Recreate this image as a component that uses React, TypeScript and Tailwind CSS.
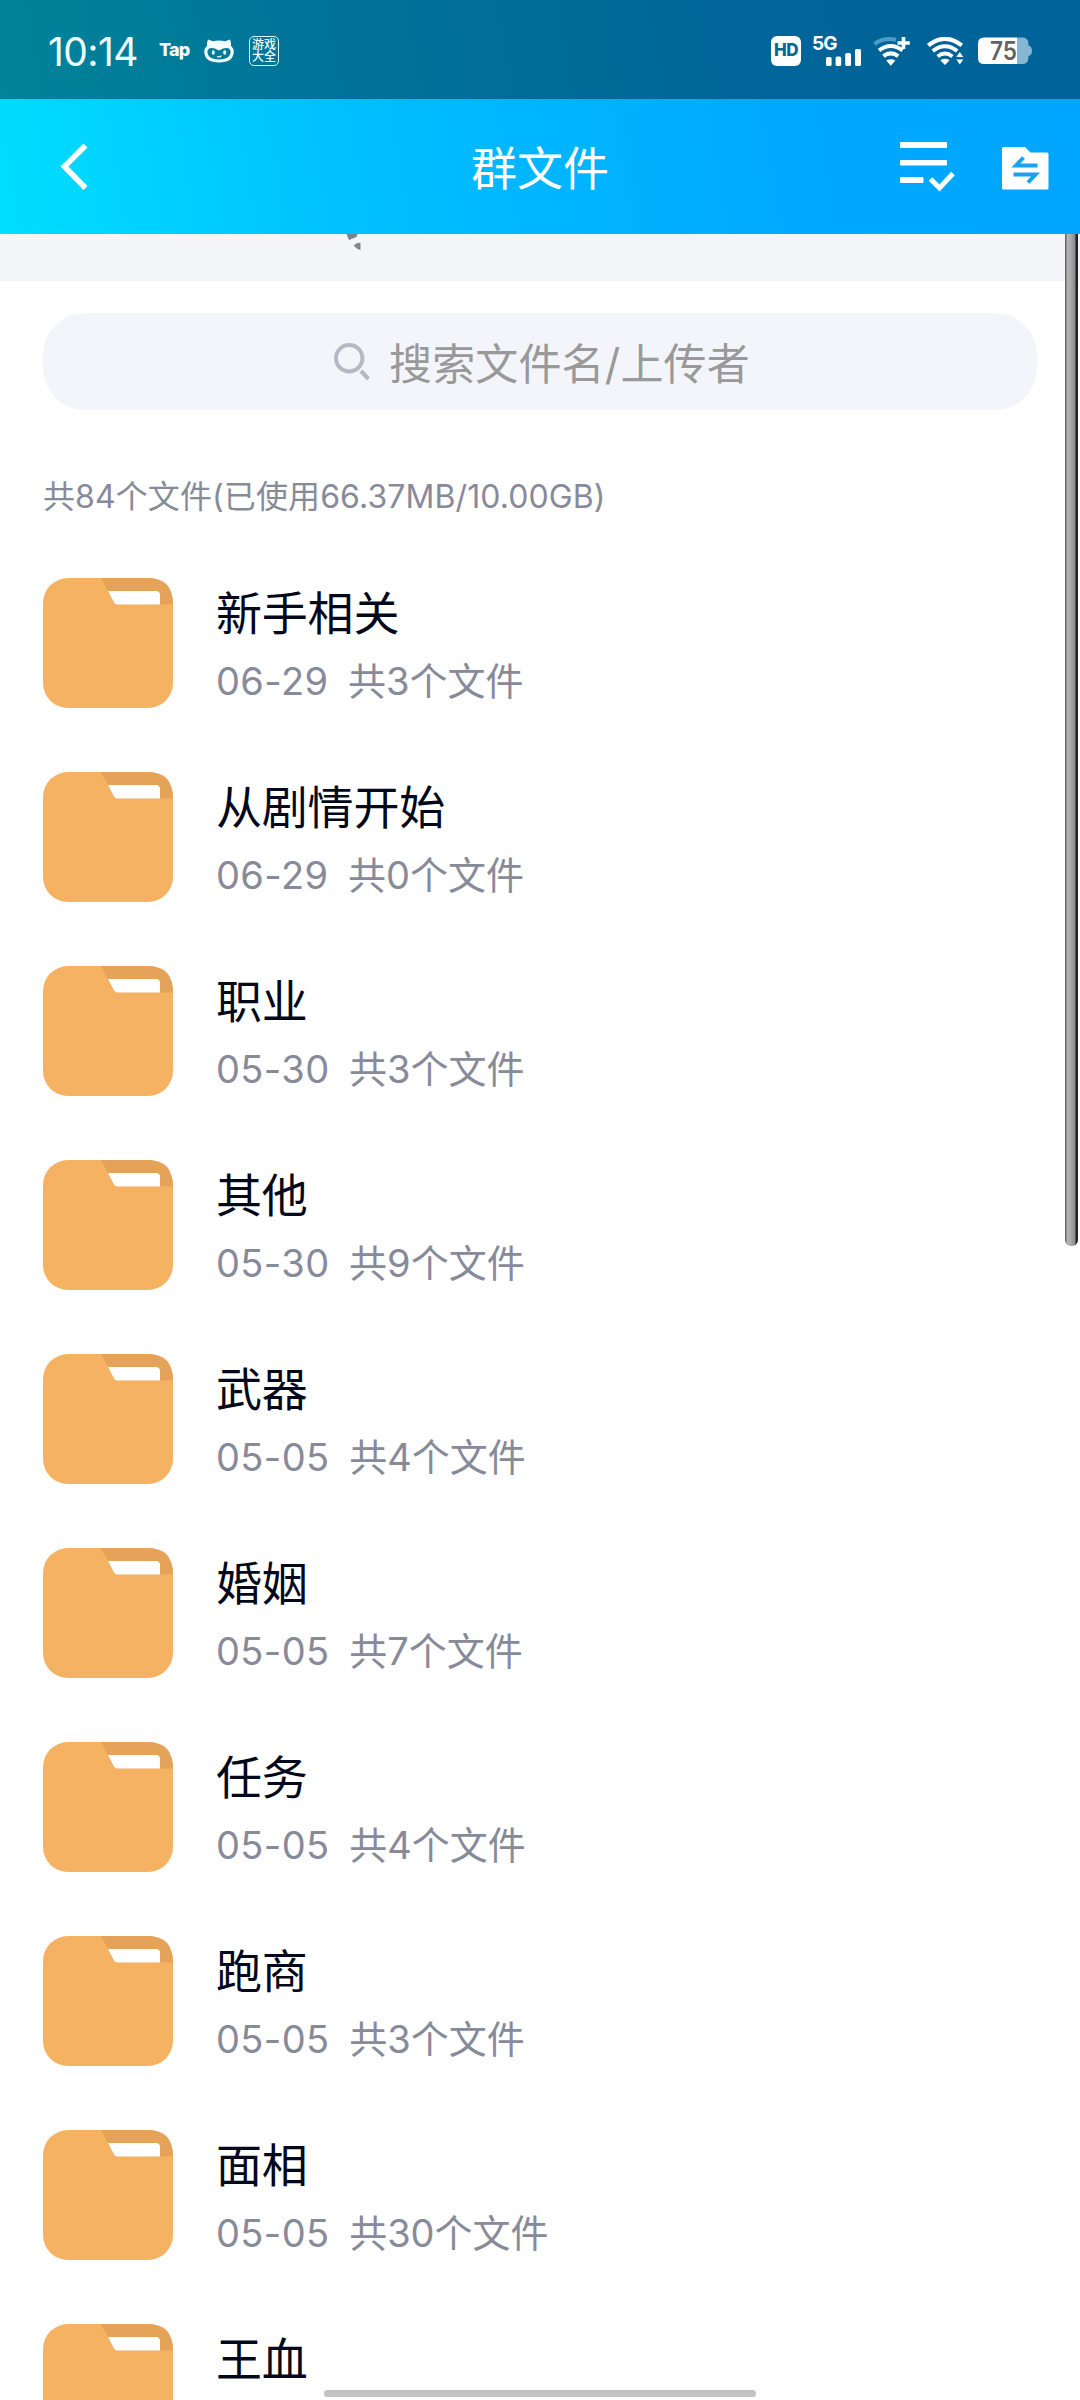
type Folder = {
  name: string;
  date?: string;
  count?: number;
};

const folders: Folder[] = [
  { name: "新手相关", date: "06-29", count: 3 },
  { name: "从剧情开始", date: "06-29", count: 0 },
  { name: "职业", date: "05-30", count: 3 },
  { name: "其他", date: "05-30", count: 9 },
  { name: "武器", date: "05-05", count: 4 },
  { name: "婚姻", date: "05-05", count: 7 },
  { name: "任务", date: "05-05", count: 4 },
  { name: "跑商", date: "05-05", count: 3 },
  { name: "面相", date: "05-05", count: 30 },
  { name: "王血" },
];

const CatIcon = () => (
  <svg width="30" height="24" viewBox="0 0 30 24">
    <path
      d="M4 0.5 L9 2.2 Q15 0.8 21 2.2 L26 0.5 Q27.5 3.5 26.8 6.5 Q30 9.5 29.8 13 Q29 23.5 15 23.5 Q1 23.5 0.2 13 Q0 9.5 3.2 6.5 Q2.5 3.5 4 0.5Z"
      fill="#f2fdff"
    />
    <path
      d="M5 9.5 Q8.5 8 15 11.5 Q21.5 8 25 9.5 Q27 11 26.6 14 Q25 20.5 15 20.5 Q5 20.5 3.4 14 Q3 11 5 9.5Z"
      fill="#007b98"
    />
    <ellipse cx="9.3" cy="13.5" rx="1.5" ry="2.2" fill="#f2fdff" />
    <ellipse cx="20.7" cy="13.5" rx="1.5" ry="2.2" fill="#f2fdff" />
    <path d="M13 17.6 Q15.5 18.6 17.5 16.8" stroke="#f2fdff" strokeWidth="1.3" fill="none" />
  </svg>
);

const SignalIcon = () => (
  <svg width="35" height="17" viewBox="0 0 35 17" fill="#fff">
    <rect x="0" y="8" width="5.6" height="9" rx="1.6" />
    <rect x="9.6" y="7.5" width="5.6" height="9.5" rx="1.6" />
    <rect x="19.2" y="4" width="5.8" height="13" rx="1.6" />
    <rect x="29" y="0" width="6" height="17" rx="1.6" />
  </svg>
);

const WifiPlusIcon = () => (
  <svg width="38" height="30" viewBox="0 0 38 30" fill="none">
    <path d="M1.5 8 Q11 1 23 3.8" stroke="#4d9cc5" strokeWidth="4.2" />
    <path d="M6 14.3 Q17.8 5.8 29.6 14.3" stroke="#fff" strokeWidth="4" />
    <path d="M10.4 20.2 Q17.8 14.6 25.2 20.2" stroke="#fff" strokeWidth="4" />
    <path d="M13.2 24.6 Q17.8 21.8 22.4 24.6 L17.8 29.8Z" fill="#fff" />
    <path d="M30.5 1 V13 M24.5 7 H36.8" stroke="#fff" strokeWidth="3.6" />
  </svg>
);

const WifiIcon = () => (
  <svg width="37" height="28" viewBox="0 0 37 28" fill="none">
    <path d="M1.2 8.4 Q18 -4.6 34.8 8.4" stroke="#fff" strokeWidth="4.2" />
    <path d="M5.8 14 Q18 4.6 30.2 14" stroke="#fff" strokeWidth="4" />
    <path d="M10.6 19.4 Q18 13.6 25.4 19.4" stroke="#fff" strokeWidth="3.8" />
    <path d="M13.4 23.2 Q18 20.4 22.6 23.2 L18 28Z" fill="#fff" />
    <path d="M29.3 20 L32.8 15 L36.3 20Z M29.3 22.4 L32.8 27.4 L36.3 22.4Z" fill="#fff" />
  </svg>
);

const BatteryIcon = () => (
  <svg width="54" height="28" viewBox="0 0 54 28">
    <path d="M39 0.5 H44 Q50 0.5 50.4 6 V8.5 Q54 9 54 14 Q54 18.5 50.4 19 V21.5 Q50 27 44 27 H39Z" fill="#85b6d2" />
    <path d="M6 0.5 H39 V27 H6 Q0 27 0 21 V6.5 Q0 0.5 6 0.5Z" fill="#fff" />
    <text x="12" y="23" fontSize="25" fontWeight="600" fill="#626265" textLength="27" lengthAdjust="spacingAndGlyphs">
      75
    </text>
  </svg>
);

const StatusBar = () => (
  <div className="h-[99px] bg-black/40 flex items-center pl-[48px] pr-[48px] pt-[3px]">
    <div className="w-[90px] text-[39px] leading-none text-[#f0fdff] tracking-[-0.6px]">10:14</div>
    <div className="ml-[21px] w-[31px] text-[18px] leading-none font-extrabold text-[#f2fdff] tracking-[-0.8px] -translate-y-px">
      Tap
    </div>
    <div className="ml-[14px]">
      <CatIcon />
    </div>
    <div className="ml-[15px] size-[30px] rounded-[5px] border border-[#dff6fb] text-[#f2fdff] text-[12px] leading-[12px] font-medium text-center flex flex-col justify-center">
      <span>游戏</span>
      <span>大全</span>
    </div>

    <div className="ml-auto size-[30px] rounded-[6px] bg-white text-[#0a6598] text-[17px] font-extrabold tracking-[-0.5px] flex items-center justify-center">
      HD
    </div>
    <div className="ml-[11px] w-[49px] h-[30px] relative">
      <span className="absolute left-0 -top-[1px] text-[19px] leading-[18px] font-bold text-white tracking-[-1px]">5G</span>
      <div className="absolute right-0 bottom-0">
        <SignalIcon />
      </div>
    </div>
    <div className="ml-[12px]">
      <WifiPlusIcon />
    </div>
    <div className="ml-[16px]">
      <WifiIcon />
    </div>
    <div className="ml-[14px]">
      <BatteryIcon />
    </div>
  </div>
);

const Header = () => (
  <div className="h-[135px] grid grid-cols-3 items-center">
    <svg className="ml-[60px]" width="30" height="48" viewBox="0 0 30 48" fill="none">
      <path d="M25.5 2.5 L4.5 23.5 L25.5 45" stroke="#fff" strokeWidth="5.6" />
    </svg>
    <div className="pt-[2px] text-[46px] leading-[60px] text-white text-center">群文件</div>
    <div className="flex justify-end items-center pr-[31px]">
      <svg width="56" height="50" viewBox="0 0 56 50" fill="none">
        <rect x="0" y="0" width="47" height="6" rx="1" fill="#fff" />
        <rect x="0" y="18" width="47" height="5.5" rx="1" fill="#fff" />
        <rect x="0" y="35" width="23.5" height="6" rx="1" fill="#fff" />
        <path d="M30.5 37 L39.5 46 L53 31.5" stroke="#fff" strokeWidth="5" />
      </svg>
      <svg className="ml-[46px] mt-[3px]" width="47" height="43" viewBox="0 0 47 43" fill="none">
        <path
          d="M1.5 0 H23 L28.5 5.5 H45 Q46.5 5.5 46.5 7 V41 Q46.5 42.5 45 42.5 H1.5 Q0 42.5 0 41 V1.5 Q0 0 1.5 0Z"
          fill="#fff"
        />
        <path d="M35.5 18.5 H14 L21.5 10.5" stroke="#1aa3f5" strokeWidth="4" />
        <path d="M11.5 27.5 H33.5 L26 35.5" stroke="#1aa3f5" strokeWidth="4" />
      </svg>
    </div>
  </div>
);

const FolderIcon = () => (
  <svg width="130" height="130" viewBox="0 0 130 130">
    <rect width="130" height="130" rx="25" fill="#f6b263" />
    <path d="M58 0 H105 Q130 0 130 26.5 H72Z" fill="#e5a259" />
    <path d="M65 13 H113 Q117 13 117 17 V26.5 H74 Q72 26.5 71 24.5Z" fill="#fff" />
  </svg>
);

const App = () => {
  return (
    <div className="relative w-[1080px] h-[2400px] overflow-hidden bg-white font-[Inter,'Noto_Sans_CJK_SC',sans-serif]">
      <div className="bg-[linear-gradient(80deg,#00deff_0%,#00c0ff_32%,#00a8ff_72%,#00a5ff_100%)]">
        <StatusBar />
        <Header />
      </div>

      {/* bottom edge of the scrolled-away notice */}
      <div className="h-[47px] bg-[#f4f5f9]">
        <svg className="ml-[345px]" width="20" height="18" viewBox="0 0 20 18">
          <path d="M1.5 0 H12.5 L11.5 3 L4 6Z" fill="#7f8195" />
          <path d="M8.5 11.5 Q12 8 15.5 9 L15.5 16 Q12 15.5 8.5 11.5Z" fill="#85868f" />
        </svg>
      </div>

      <div className="mt-8 mx-[43px] h-[97px] rounded-[42px] bg-[#f4f5fa] flex items-center pl-[291px]">
        <svg width="36" height="38" viewBox="0 0 36 38" fill="none">
          <circle cx="15.2" cy="15.2" r="13.2" stroke="#b7b8c6" strokeWidth="4" />
          <path d="M27 28 L34.5 36" stroke="#b7b8c6" strokeWidth="4.2" />
        </svg>
        <span className="ml-[19px] text-[43px] leading-[60px] text-[#999] tracking-[0.15px] translate-y-[2px]">
          搜索文件名/上传者
        </span>
      </div>

      <div className="h-[136px] pt-[38px] pl-[43px] flex items-center text-[32px] text-[#878a99] tracking-[0.1px]">
        共84个文件(已使用66.37MB/10.00GB)
      </div>

      {folders.map((folder) => (
        <div key={folder.name} className="h-[194px] px-[43px] pt-8 flex items-start">
          <FolderIcon />
          <div className="ml-[43px] pt-[2px]">
            <div className="text-[46px] leading-[66px] text-[#03081a] tracking-[-0.2px]">{folder.name}</div>
            {folder.date && (
              <div className="pt-px text-[38px] leading-[68px] text-[#878a99] flex">
                <span className="tracking-[0.4px]">{folder.date}</span>
                <span className="ml-[19.5px]">共{folder.count}个文件</span>
              </div>
            )}
          </div>
        </div>
      ))}

      {/* scrollbar */}
      <div className="absolute left-[1065px] top-[234px] w-[13px] h-[1012px] rounded-b-[6px] bg-[linear-gradient(90deg,#666_0px,#666_1px,#b5b5b5_2px,#a8a8a8_6px,#8a8a8a_10px,#222_11px,#222_13px)]" />

      {/* home indicator */}
      <div className="absolute left-[324px] top-[2390px] w-[432px] h-[7px] rounded-full bg-[#c2c2c2]" />
    </div>
  );
};

export default App;
